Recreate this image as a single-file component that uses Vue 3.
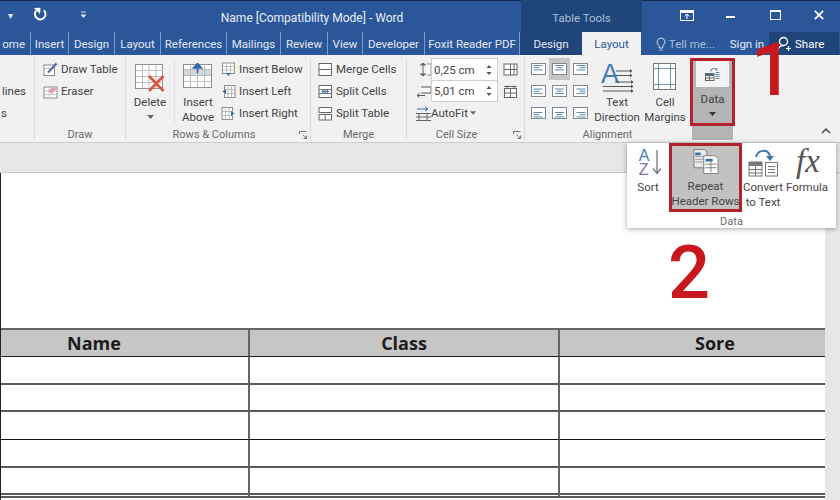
<script setup>
const alignCells = []
for (const v of [0, 1, 2]) for (const h of [0, 1, 2]) alignCells.push({ v, h, active: v === 0 && h === 1 })
const lineW = [9, 6, 9]
const lineX = (h, w) => (h === 0 ? 2.5 : h === 1 ? (15 - w) / 2 : 12.5 - w)
const rows = [0, 1, 2, 3, 4, 5]
</script>

<template>
  <div class="app">
    <header class="titlebar">
      <span class="qat-caret first">▾</span>
      <svg class="undo" viewBox="0 0 14 14" width="14" height="14"><path d="M3.200 3.600 A5.300 5.300 0 1 0 10.800 3.200" fill="none" stroke="#fff" stroke-width="2"/><path d="M1 1 7.500 .8 7 7Z" fill="#fff"/></svg>
      <svg class="qat-more" viewBox="0 0 7 8" width="7" height="8"><path d="M1 1h5" stroke="#dfe7f2"/><path d="M.5 3.500h6L3.500 7Z" fill="#dfe7f2"/></svg>
      <span class="title">Name [Compatibility Mode] - Word</span>
      <span class="tools">Table Tools</span>
      <span class="winctl first-ctl">
        <svg viewBox="0 0 14 11" width="14" height="11"><rect x=".5" y=".5" width="13" height="10" fill="none" stroke="#fff"/><rect x="1" y="1" width="12" height="2" fill="#fff"/><path d="M7 4v5M4.800 6.400 7 4l2.200 2.400" fill="none" stroke="#fff"/></svg>
      </span>
      <span class="winctl"><i class="minimize"></i></span>
      <span class="winctl"><i class="maximize"></i></span>
      <span class="winctl">
        <svg viewBox="0 0 10 10" width="10" height="10"><path d="M.8.8 9.200 9.200M9.200.8.8 9.200" stroke="#fff" stroke-width="1.800"/></svg>
      </span>
    </header>

    <nav class="tabs">
      <span class="tab sep home">ome</span>
      <span class="tab sep">Insert</span>
      <span class="tab sep">Design</span>
      <span class="tab sep">Layout</span>
      <span class="tab sep">References</span>
      <span class="tab sep">Mailings</span>
      <span class="tab sep">Review</span>
      <span class="tab sep">View</span>
      <span class="tab sep">Developer</span>
      <span class="tab sep">Foxit Reader PDF</span>
      <span class="tab tool">Design</span>
      <span class="tab current">Layout</span>
      <span class="tab tell">
        <svg viewBox="0 0 10 14" width="10" height="14"><path d="M5 1a4 4 0 0 0-2.200 7.300L3.400 11h3.200l.6-2.700A4 4 0 0 0 5 1ZM3.600 13h2.800" fill="none" stroke="#cfdaea"/></svg>
        <span>Tell me...</span>
      </span>
      <span class="tab">Sign in</span>
      <span class="tab share">
        <svg viewBox="0 0 15 16" width="15" height="16"><circle cx="6.500" cy="5.500" r="4" fill="none" stroke="#fff" stroke-width="1.400"/><path d="M1 14c.6-3 2.500-4.400 5.500-4.400M11.500 10v5M9 12.500h5" fill="none" stroke="#fff" stroke-width="1.200"/></svg>
        <span>Share</span>
      </span>
    </nav>

    <section class="ribbon">
      <div class="group g-cut">
        <div class="body cutbody"><span class="cuttext">lines</span><span class="cuttext">s</span></div>
      </div>

      <div class="group g-draw">
        <div class="body list">
          <div class="row">
            <svg class="ic" viewBox="0 0 15 15"><rect x="1" y="3" width="10.500" height="10.500" fill="#fff" stroke="#8a8a8a"/><path d="M1 6.500h10.500" stroke="#b8b8b8"/><path d="M5 10.500 13.500 1.500" stroke="#4a6f9c" stroke-width="2"/></svg>
            <span>Draw Table</span>
          </div>
          <div class="row">
            <svg class="ic" viewBox="0 0 15 15"><rect x="1" y="3" width="13" height="11" fill="#fff" stroke="#8a8a8a"/><path d="M1 7h13M1 10.500h13M6 3v11" stroke="#c8c8c8"/><path d="M5 7.500 10 2.500 13.500 5 9 10Z" fill="#ea9ab0"/></svg>
            <span>Eraser</span>
          </div>
        </div>
        <div class="glabel">Draw</div>
      </div>

      <div class="group g-rows">
        <div class="body rowsbody">
          <div class="big b-delete">
            <svg viewBox="0 0 30 28" width="30" height="28"><rect x=".5" y=".5" width="27" height="24" fill="#fff" stroke="#8f8f8f"/><path d="M.5 6.500h27M.5 12.500h27M.5 18.500h27M7.500.5v24M14 .5v24M21 .5v24" stroke="#bcbcbc"/><path d="M14 12 28.500 27M28.500 12 14 27" stroke="#d8543f" stroke-width="2.600"/></svg>
            <span class="bt">Delete</span>
            <svg class="caret-svg" viewBox="0 0 7 4" width="7" height="4"><path d="M0 0h7L3.500 4Z" fill="#666"/></svg>
          </div>
          <i class="vsep"></i>
          <div class="big b-above">
            <svg viewBox="0 0 30 26" width="30" height="26"><rect x=".5" y="1.500" width="28" height="23" fill="#fff" stroke="#8f8f8f"/><rect x="1" y="6" width="27" height="6" fill="#cfd6df"/><path d="M1 6.500h27M1 12.500h27M1 18.500h27M7.500 1.500v23M14.500 1.500v23M21.500 1.500v23" stroke="#bcbcbc"/><path d="M14.500 10V3M10.500 5 14.500 .5 18.500 5Z" fill="#2f6aa8" stroke="#2f6aa8" stroke-width="1.600"/></svg>
            <span class="bt above-t">Insert<br>Above</span>
          </div>
          <div class="list rc-list">
            <div class="row">
              <svg class="ic" viewBox="0 0 15 15"><rect x="1.500" y="1" width="12" height="10.500" fill="#fff" stroke="#8f8f8f"/><path d="M1.500 4.500h12M1.500 8h12M5.500 1v10M9.500 1v10" stroke="#bbb"/><path d="M5 11h5l-2.500 3Z" fill="#3a6ea5"/></svg>
              <span>Insert Below</span>
            </div>
            <div class="row">
              <svg class="ic" viewBox="0 0 15 15"><rect x="3.500" y="1.500" width="10.500" height="12" fill="#fff" stroke="#8f8f8f"/><path d="M3.500 5.500h10.500M3.500 9.500h10.500M7 1.500v12M10.500 1.500v12" stroke="#bbb"/><path d="M5 5v5L1.500 7.500Z" fill="#3a6ea5"/></svg>
              <span>Insert Left</span>
            </div>
            <div class="row">
              <svg class="ic" viewBox="0 0 15 15"><rect x="1" y="1.500" width="10.500" height="12" fill="#fff" stroke="#8f8f8f"/><path d="M1 5.500h10.500M1 9.500h10.500M4.500 1.500v12M8 1.500v12" stroke="#bbb"/><path d="M10 5v5l3.500-2.500Z" fill="#3a6ea5"/></svg>
              <span>Insert Right</span>
            </div>
          </div>
        </div>
        <div class="glabel rc-label">Rows &amp; Columns<svg class="launch" viewBox="0 0 8 8" width="8" height="8"><path d="M.5 3V.5H7.500M7.500 7.500 3.500 3.500M7.500 4.500v3h-3" fill="none" stroke="#777"/></svg></div>
      </div>

      <div class="group g-merge">
        <div class="body list">
          <div class="row">
            <svg class="ic" viewBox="0 0 15 15"><rect x="1" y="1.500" width="12.500" height="12" fill="#fff" stroke="#666"/><path d="M1 7.500h12.500" stroke="#666"/></svg>
            <span>Merge Cells</span>
          </div>
          <div class="row">
            <svg class="ic" viewBox="0 0 15 15"><rect x="1" y="1.500" width="12.500" height="12" fill="#fff" stroke="#666"/><path d="M1 5.500h12.500M1 9.500h12.500" stroke="#777"/><path d="M3.500 7.500h7.500M5 5.500v4M7.200 5.500v4M9.500 5.500v4" stroke="#3a6ea5"/></svg>
            <span>Split Cells</span>
          </div>
          <div class="row">
            <svg class="ic" viewBox="0 0 15 15"><path d="M1 1.500h12.500v5H1ZM1 8.500h12.500v5.500H1ZM7.200 8.500V14" fill="#fff" stroke="#666"/></svg>
            <span>Split Table</span>
          </div>
        </div>
        <div class="glabel">Merge</div>
      </div>

      <div class="group g-size">
        <div class="body sizebody">
          <div class="sizegrid">
            <svg class="ic" viewBox="0 0 15 15"><path d="M7 1 4.500 3h5ZM7 14l-2.500-2h5ZM7 3v9" fill="#3a6ea5" stroke="#666"/><path d="M11 2h4v11h-4" fill="#fff" stroke="#888"/></svg>
            <div class="spin top">
              <span>0,25 cm</span>
              <svg viewBox="0 0 6 12" width="6" height="12"><path d="M3 1 .5 4h5ZM3 11 .5 8h5Z" fill="#555"/></svg>
            </div>
            <svg class="ic" viewBox="0 0 15 15"><rect x="1" y="2" width="13" height="11" fill="#fff" stroke="#666"/><path d="M7.500 2v11M11 2v11M1 7.500h13" stroke="#666"/></svg>
            <svg class="ic" viewBox="0 0 15 15"><path d="M5 3H15V9H5M1 11.500h8M1 11.500l2.500-2M1 11.500l2.500 2" fill="#fff" stroke="#555"/></svg>
            <div class="spin">
              <span>5,01 cm</span>
              <svg viewBox="0 0 6 12" width="6" height="12"><path d="M3 1 .5 4h5ZM3 11 .5 8h5Z" fill="#555"/></svg>
            </div>
            <svg class="ic" viewBox="0 0 15 15"><rect x="1.500" y="4.500" width="12" height="9" fill="#fff" stroke="#666"/><path d="M1.500 9h12M7.500 4.500v9M4 1.500v3M11 1.500v3M1 2.500h13" stroke="#666"/></svg>
            <svg class="ic" viewBox="0 0 15 15"><path d="M0 7.500h15M0 11h15M0 14.500h15M3 7v8M11 7v8" fill="none" stroke="#666"/><path d="M1 3h11M9 1l3 2-3 2" fill="none" stroke="#3a6ea5"/></svg>
            <div class="autofit">AutoFit<svg viewBox="0 0 7 4" width="6" height="4"><path d="M0 0h7L3.500 4Z" fill="#666"/></svg></div>
          </div>
        </div>
        <div class="glabel size-label">Cell Size<svg class="launch" viewBox="0 0 8 8" width="8" height="8"><path d="M.5 3V.5H7.500M7.500 7.500 3.500 3.500M7.500 4.500v3h-3" fill="none" stroke="#777"/></svg></div>
      </div>

      <div class="group g-align">
        <div class="body alignbody">
          <div class="aligngrid">
            <span v-for="(c, i) in alignCells" :key="i" class="acell" :class="{ on: c.active }">
              <svg viewBox="0 0 15 12" width="15" height="12">
                <rect x=".5" y=".5" width="14" height="11" fill="#fff" stroke="#7a8a99"/>
                <path v-for="(w, j) in lineW" :key="j" :d="`M${lineX(c.h, w)} ${2.500 + c.v * 1.500 + j * 2.200}h${w}`" stroke="#5f88ad"/>
              </svg>
            </span>
          </div>
          <div class="big b-dir">
            <span class="dir-icon">
              <span class="dir-a">A</span>
              <svg viewBox="0 0 19 30" width="19" height="30"><path d="M1 7h15M1 11.500h15M0 18h18M-12 22.500h30M-12 27h30" stroke="#555" fill="none"/><path d="M15 5l2.500 2-2.500 2M15 9.500l2.500 2-2.500 2M16 16l2.500 2-2.500 2M16 20.500l2.500 2-2.500 2M16 25l2.500 2-2.500 2" fill="#555"/></svg>
            </span>
            <span class="bt">Text<br>Direction</span>
          </div>
          <div class="big b-margin">
            <svg viewBox="0 0 24 28" width="24" height="28"><rect x=".5" y=".5" width="22" height="26" fill="#fff" stroke="#777"/><path d="M5.500.5v26M17.500.5v26M.5 5.500h22M.5 21.500h22" stroke="#6d9aa8"/></svg>
            <span class="bt">Cell<br>Margins</span>
          </div>
        </div>
        <div class="glabel align-label">Alignment</div>
      </div>

      <div class="data-col">
        <div class="data-btn">
          <span class="data-ic">
            <svg viewBox="0 0 15 15" width="15" height="15"><path d="M5.500 4.500a3.500 3.500 0 0 1 6-2" fill="none" stroke="#4a7aa5"/><path d="M10 3.500 12.500 3 12 .8Z" fill="#4a7aa5"/><rect x=".5" y="6.500" width="8.500" height="7" fill="#fff" stroke="#666"/><path d="M1 8.500h8M1 11h8M4.500 8.500v5" stroke="#666"/><rect x="1" y="7" width="7.500" height="1.500" fill="#3a6ea5"/><path d="M10.500 5.500h4M10.500 7.500h4M10.500 9.500h4M10.500 11.500h4" stroke="#5f88ad"/></svg>
          </span>
          <span class="bt">Data</span>
          <svg class="caret-svg" viewBox="0 0 7 4" width="7" height="4"><path d="M0 0h7L3.500 4Z" fill="#333"/></svg>
        </div>
      </div>

      <div class="collapse">
        <svg viewBox="0 0 10 6" width="10" height="6"><path d="M1 5 5 1.200 9 5" fill="none" stroke="#555" stroke-width="1.600"/></svg>
      </div>
    </section>

    <div class="rulerbar"></div>

    <main class="docarea">
      <div class="page">
        <div class="table">
          <div class="th">Name</div><div class="th">Class</div><div class="th">Sore</div>
          <template v-for="r in rows" :key="r">
            <div class="td" :class="{ crisp: r === 2 }"></div><div class="td" :class="{ crisp: r === 2 }"></div><div class="td" :class="{ crisp: r === 2 }"></div>
          </template>
        </div>
      </div>
      <div class="scroll"></div>
    </main>

    <aside class="dropdown">
      <div class="dd-items">
        <div class="dd sort">
          <span class="az-wrap">
            <span class="az"><b class="a">A</b><b class="z">Z</b></span>
            <svg viewBox="0 0 10 26" width="10" height="26"><path d="M5 1v23M1 19.500l4 5 4-5" fill="none" stroke="#777" stroke-width="1.300"/></svg>
          </span>
          <span class="bt">Sort</span>
        </div>
        <div class="dd repeat">
          <svg viewBox="0 0 28 28" width="28" height="28">
            <path d="M.5 .5H12L15 3.500V21H.5Z" fill="#e9e9e9" stroke="#777"/>
            <rect x="2" y="4" width="6" height="3" fill="#3a6ea5"/><rect x="2" y="8" width="11" height="1" fill="#999"/><rect x="2" y="11" width="11" height="1" fill="#999"/><rect x="2" y="14" width="11" height="1" fill="#999"/>
            <path d="M11.500 7.500H24L27.500 11V27.500H11.500Z" fill="#fff" stroke="#777"/>
            <rect x="13.500" y="11" width="8" height="3" fill="#3a6ea5"/><path d="M13 17h13M13 21h13M19.500 14v12" stroke="#777"/>
          </svg>
          <span class="bt">Repeat<br>Header Rows</span>
        </div>
        <div class="dd convert">
          <svg viewBox="0 0 30 28" width="30" height="28">
            <path d="M8 8C10 0 20 0 22 7" fill="none" stroke="#3f78a8" stroke-width="2"/><path d="M18 7h8l-4 5Z" fill="#3f78a8"/>
            <rect x="1" y="13" width="13" height="14" fill="#fff" stroke="#777"/><rect x="1" y="13" width="13" height="4" fill="#777"/><path d="M1 20.500h13M1 24h13M7.500 17v10" stroke="#777"/>
            <rect x="17.500" y="13.500" width="12" height="13.500" fill="#fff" stroke="#777"/><path d="M20 17.500h7M20 20.500h7M20 23.500h7" stroke="#777"/>
          </svg>
          <span class="bt">Convert<br>to Text</span>
        </div>
        <div class="dd formula">
          <span class="fx">fx</span>
          <span class="bt">Formula</span>
        </div>
      </div>
      <div class="dd-label">Data</div>
    </aside>

    <span class="num one">1</span>
    <span class="num two">2</span>
  </div>
</template>

<style>
html, body { margin: 0; padding: 0; background: #fff; }
</style>

<style scoped>
.app {
  position: relative; width: 840px; height: 500px; overflow: hidden;
  display: flex; flex-direction: column;
  font-family: Roboto, "Open Sans", sans-serif; font-size: 11.500px; color: #444;
  background: #fff;
}
.titlebar {
  height: 32px; box-sizing: border-box; flex: none; background: #2b579a; border-top: 1px solid #14294f;
  display: grid; grid-template-columns: 28px 27px 50px 416px 121px 67px 43px 46px 42px; align-items: center;
  color: #e6ecf5;
}
.qat-caret { font-size: 10px; color: #dfe7f2; text-align: left; padding-left: 8px; margin-top: -3px; }
.undo { justify-self: start; margin-left: 5px; margin-top: -5px; }
.qat-more { justify-self: end; margin-right: 18px; margin-top: -3px; }
.title { font-size: 12px; text-align: center; color: #e8eef7; margin-top: 3px; margin-left: -2px; }
.tools { align-self: stretch; background: #204679; color: #a9bdd8; display: flex; align-items: center; justify-content: center; font-size: 11.500px; margin-top: -1px; padding-top: 3px; }
.winctl { display: flex; align-items: center; justify-content: center; height: 100%; margin-top: -3px; }
.first-ctl { padding-left: 23px; }
.minimize { width: 9px; height: 2px; background: #fff; margin-top: 3px; }
.maximize { width: 9px; height: 7px; border: 1px solid #fff; border-top-width: 2px; }

.tabs {
  height: 23px; flex: none; background: #2b579a; color: #e4eaf4;
  display: grid; grid-template-columns: 31px 38px 46px 46px 66px 54px 47px 35px 62px 95px 62px 59px 84px 44px 70px;
}
.tab { display: flex; align-items: center; justify-content: center; font-size: 11.500px; white-space: nowrap; overflow: hidden; }
.tab.sep { border-right: 1px solid #7d9ac5; box-sizing: border-box; }
.tab.home { justify-content: flex-end; padding-right: 5px; }
.tool { background: #204679; }
.current { background: #f1f1f1; color: #2b579a; }
.tell { gap: 3px; color: #a9bfde; justify-content: flex-end; padding-right: 10px; }
.share { background: #204679; gap: 3px; justify-content: flex-start; padding-left: 8px; color: #fff; }

.ribbon {
  height: 88px; flex: none; box-sizing: border-box; background: #f1f1f1; padding-top: 3px;
  display: flex; border-bottom: 1px solid #d0d0d0;
}
.group { display: flex; flex-direction: column; box-sizing: border-box; border-right: 1px solid #dcdcdc; height: 82px; }
.body { height: 70px; }
.glabel { height: 12px; line-height: 14px; text-align: center; color: #6b6b6b; font-size: 11px; position: relative; }
.launch { position: absolute; right: 3px; top: 3px; }
.list { display: flex; flex-direction: column; }
.row { height: 22px; display: flex; align-items: center; gap: 3px; white-space: nowrap; }
.ic { width: 15px; height: 15px; flex: none; }
.g-cut { width: 35px; }
.cutbody { display: flex; flex-direction: column; padding-top: 22px; box-sizing: border-box; }
.cuttext { height: 22px; line-height: 22px; padding-left: 2px; }
.cuttext:last-child { margin-left: -1px; }
.g-draw { width: 91px; }
.g-draw .list { padding-left: 8px; }
.g-rows { width: 185px; }
.rowsbody { display: flex; }
.big { display: flex; flex-direction: column; align-items: center; flex: none; }
.bt { line-height: 15px; text-align: center; white-space: nowrap; }
.caret-svg { margin-top: 5px; flex: none; }
.b-delete { width: 30px; margin-left: 9px; padding-top: 6px; }
.b-delete .bt { margin-top: 3px; }
.vsep { width: 1px; height: 62px; background: #e0e0e0; margin: 3px 8px 0 9px; }
.b-above { width: 30px; padding-top: 5px; }
.above-t { margin-top: 6px; }
.rc-list { margin-left: 8px; }
.rc-label { padding-right: 8px; }
.g-merge { width: 96px; }
.g-merge .list { padding-left: 7px; }
.g-size { width: 118px; }
.sizebody { padding-left: 9px; }
.sizegrid { display: grid; grid-template-columns: 15px 67px 15px; grid-auto-rows: 22px; align-items: center; }
.sizegrid > .ic:nth-child(3), .sizegrid > .ic:nth-child(6) { margin-left: 5px; }
.spin { height: 22px; box-sizing: border-box; background: #fff; border: 1px solid #d0d0d0; display: flex; align-items: center; justify-content: space-between; padding: 0 5px 0 2px; }
.spin.top { border-bottom: none; }
.autofit { white-space: nowrap; display: flex; align-items: center; gap: 2px; }
.size-label { padding-right: 18px; }
.g-align { width: 165px; border-right: none; }
.alignbody { display: flex; }
.aligngrid { display: grid; grid-template-columns: repeat(3, 21px); grid-auto-rows: 22px; padding-left: 3px; }
.acell { display: flex; align-items: center; justify-content: center; }
.acell.on { background: #c6c6c6; }
.b-dir { width: 52px; padding-top: 4px; }
.dir-icon { display: flex; height: 31px; width: 32px; align-items: flex-start; }
.dir-a { font-size: 27px; line-height: 24px; color: #3f7fb5; width: 16px; font-family: "Liberation Sans", sans-serif; }
.dir-icon svg { overflow: visible; margin-top: 2px; margin-left: -2px; }
.b-dir .bt { margin-top: 2px; }
.b-margin { width: 44px; padding-top: 5px; }
.b-margin .bt { margin-top: 4px; }
.data-col { width: 45px; height: 82px; background: #b4b4b4; background-clip: content-box; padding: 0 2px; box-sizing: border-box; }
.data-btn { margin: 0 -2px; height: 68px; box-sizing: border-box; border: 3px solid #b3222a; background: #b4b4b4; display: flex; flex-direction: column; align-items: center; }
.data-ic { width: 33px; height: 26px; background: #f3f3f3; display: flex; align-items: center; justify-content: center; margin-bottom: 5px; }
.data-btn .bt { color: #3f3f3f; }
.collapse { margin-left: auto; align-self: flex-end; width: 28px; height: 14px; display: flex; justify-content: center; }

.rulerbar { height: 29px; flex: none; background: #e6e6e6; border-bottom: 1px solid #c6c6c6; }
.docarea { flex: 1; display: flex; min-height: 0; }
.page { flex: 1; background: #fff; border-left: 1px solid #222; overflow: hidden; padding-top: 155px; }
.scroll { width: 15px; background: #e6e6e6; flex: none; }
.table { display: grid; grid-template-columns: 310px 310px 310px; grid-template-rows: 27px repeat(5, 27.700px) 3px; border-top: 2px solid #666; margin-left: -61px; width: 930px; }
.th { background: #c6c6c6; font-family: "Open Sans", sans-serif; font-weight: 700; font-size: 18px; color: #1c1c1c; text-align: center; line-height: 27px; border-bottom: 1px solid #222; border-right: 2px solid #666; box-sizing: border-box; }
.td { border-bottom: 2px solid #5a5a5a; border-right: 2px solid #666; box-sizing: border-box; }
.td.crisp { border-bottom: 1px solid #111; }
.th:nth-child(3n), .td:nth-child(3n) { border-right: none; }

.dropdown {
  position: absolute; left: 627px; top: 143px; width: 209px; height: 85px; background: #fff;
  box-shadow: 0 1px 5px rgba(0,0,0,.35); display: flex; flex-direction: column;
}
.dd-items { display: flex; height: 69px; }
.dd { display: flex; flex-direction: column; align-items: center; box-sizing: border-box; height: 69px; }
.sort { width: 42px; padding-top: 6px; }
.az-wrap { display: flex; height: 30px; gap: 3px; margin-left: 5px; }
.az { display: flex; flex-direction: column; font-family: "Liberation Sans", sans-serif; font-size: 16px; line-height: 14px; }
.az b { font-weight: 400; }
.az .a { color: #3f7fb5; }
.az .z { color: #8a6fa8; }
.sort .bt { margin-top: 1px; }
.repeat { width: 73px; border: 3px solid #b3222a; background: #c2c2c2; padding-top: 3px; }
.repeat .bt { margin-top: 5px; color: #444; }
.convert { width: 42px; padding-top: 6px; }
.convert .bt { margin-top: 3px; }
.formula { width: 46px; }
.fx { font-family: "Liberation Serif", serif; font-style: italic; font-size: 33px; line-height: 37px; color: #555; margin-left: 2px; }
.dd-label { text-align: center; color: #6b6b6b; line-height: 16px; font-size: 11px; margin-top: 2px; }

.num { position: absolute; font-family: Roboto, sans-serif; font-weight: 500; font-size: 74px; line-height: 74px; color: #c8171d; }
.one { left: 751px; top: 33px; }
.two { left: 668px; top: 236px; }
</style>
